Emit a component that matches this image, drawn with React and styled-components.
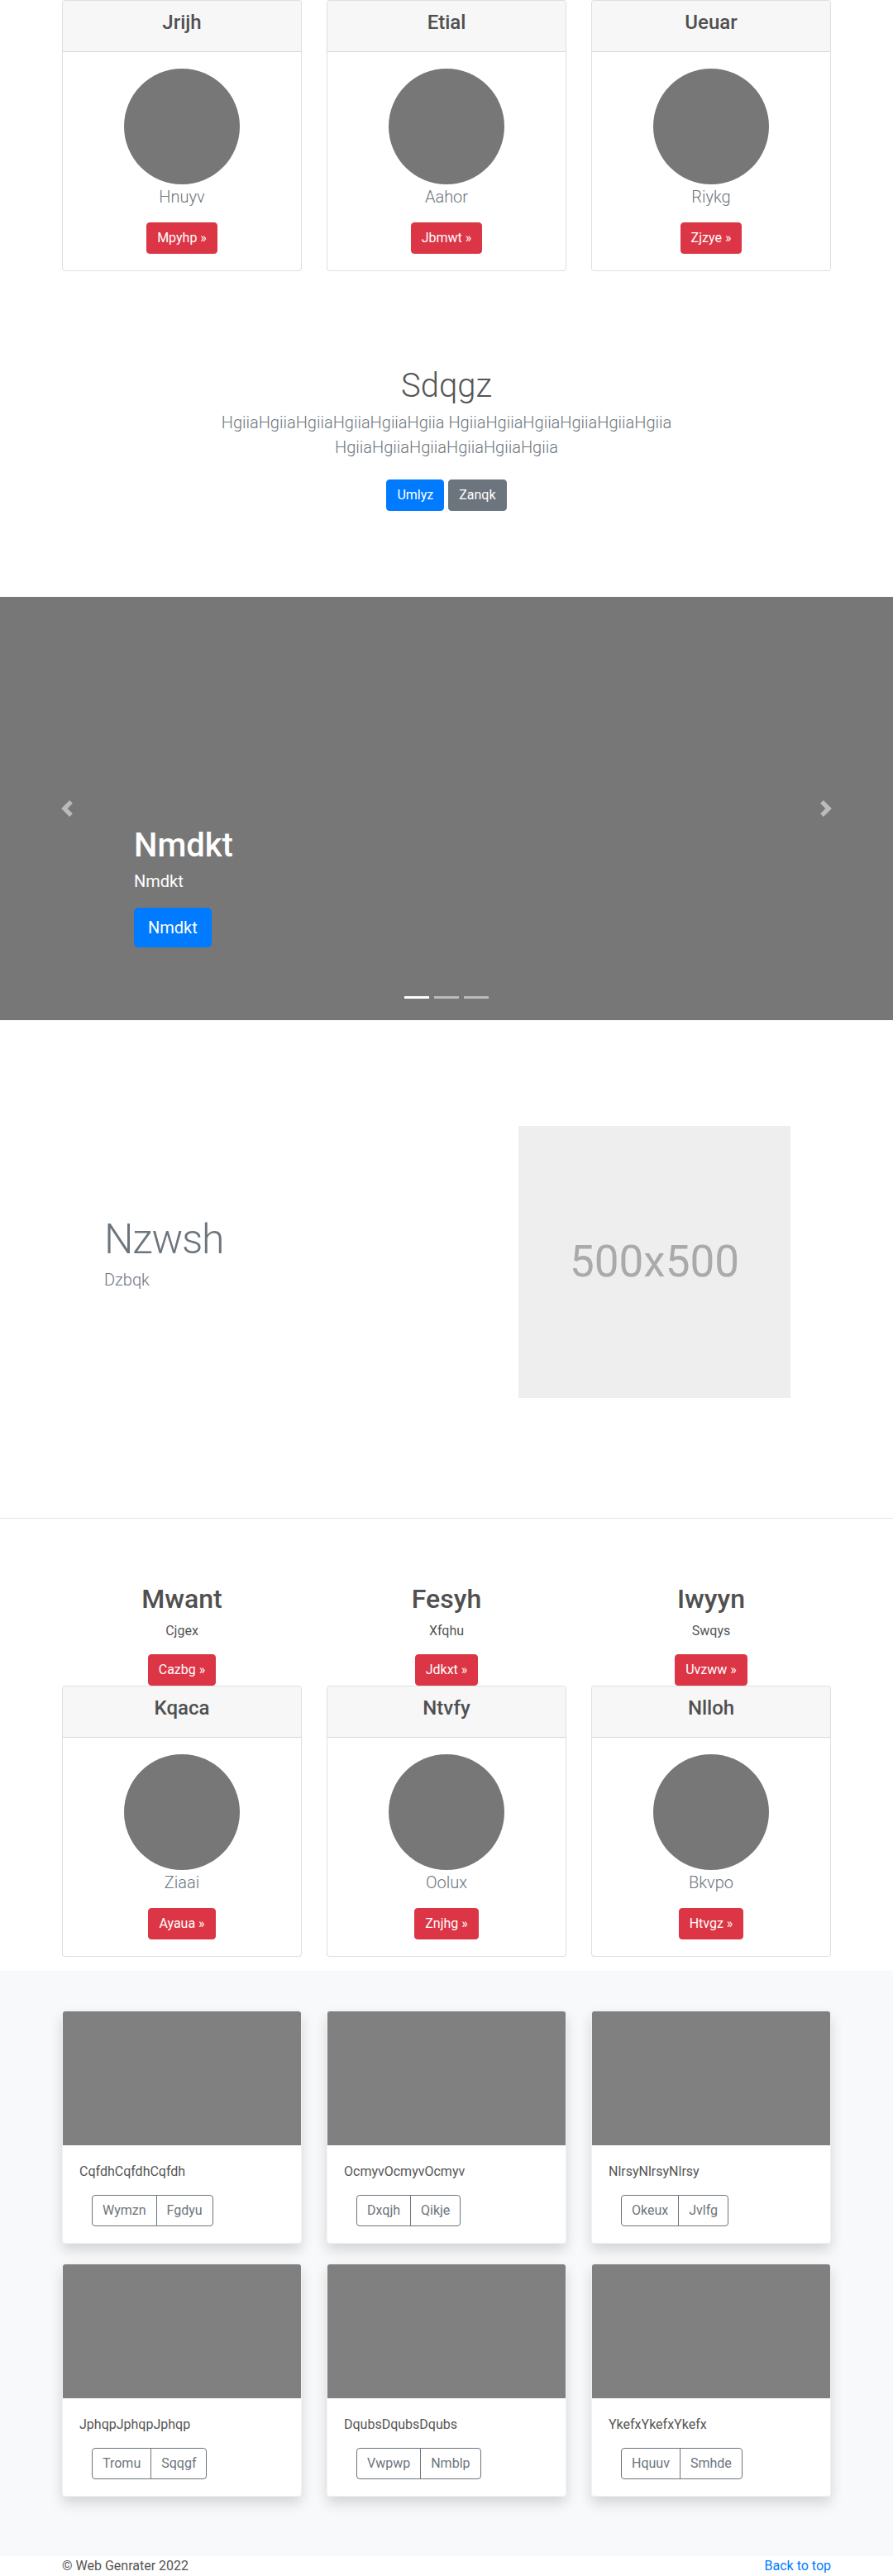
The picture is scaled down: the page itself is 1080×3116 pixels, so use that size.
import styled, { createGlobalStyle } from "styled-components";

const GlobalStyle = createGlobalStyle`
	* {
		box-sizing: border-box;
	}
	body {
		margin: 0;
		font-family: Roboto, "Open Sans", Arial, sans-serif;
		font-size: 16px;
		line-height: 1.5;
		color: #555;
		background: #fff;
	}
	h1, h2, h3, h4, p {
		margin: 0;
	}
`;

const topCards = [
	{ title: "Jrijh", name: "Hnuyv", action: "Mpyhp" },
	{ title: "Etial", name: "Aahor", action: "Jbmwt" },
	{ title: "Ueuar", name: "Riykg", action: "Zjzye" },
];

const bottomCards = [
	{ title: "Kqaca", name: "Ziaai", action: "Ayaua" },
	{ title: "Ntvfy", name: "Oolux", action: "Znjhg" },
	{ title: "Nlloh", name: "Bkvpo", action: "Htvgz" },
];

const marketing = [
	{ title: "Mwant", text: "Cjgex", action: "Cazbg" },
	{ title: "Fesyh", text: "Xfqhu", action: "Jdkxt" },
	{ title: "Iwyyn", text: "Swqys", action: "Uvzww" },
];

const albumItems = [
	{ text: "CqfdhCqfdhCqfdh", buttons: ["Wymzn", "Fgdyu"] },
	{ text: "OcmyvOcmyvOcmyv", buttons: ["Dxqjh", "Qikje"] },
	{ text: "NlrsyNlrsyNlrsy", buttons: ["Okeux", "Jvlfg"] },
	{ text: "JphqpJphqpJphqp", buttons: ["Tromu", "Sqqgf"] },
	{ text: "DqubsDqubsDqubs", buttons: ["Vwpwp", "Nmblp"] },
	{ text: "YkefxYkefxYkefx", buttons: ["Hquuv", "Smhde"] },
];

const Container = styled.div`
	max-width: ${(p) => p.$max || 960}px;
	margin: 0 auto;
	padding: 0 15px;
`;

const ThreeCols = styled.div`
	display: grid;
	grid-template-columns: repeat(3, 1fr);
	column-gap: 30px;
`;

const CardSection = styled.section`
	padding-bottom: ${(p) => p.$bottom || 0}px;
`;

const ProfileCard = styled.div`
	border: 1px solid rgba(0, 0, 0, 0.125);
	border-radius: 4px;
	background: #fff;
	overflow: hidden;
`;

const CardHeader = styled.div`
	padding: 12px 20px;
	background: #f7f7f7;
	border-bottom: 1px solid rgba(0, 0, 0, 0.125);
	text-align: center;
`;

const CardTitle = styled.h4`
	font-size: 24px;
	font-weight: 500;
	line-height: 1.2;
	margin-bottom: 8px;
	color: #505050;
`;

const CardBody = styled.div`
	padding: 20px;
	text-align: center;
`;

const Avatar = styled.div`
	width: 140px;
	height: 140px;
	border-radius: 50%;
	background: #777;
	margin: 0 auto;
`;

const Lead = styled.p`
	font-size: 20px;
	font-weight: 300;
	line-height: 30px;
	color: #6c757d;
	margin-bottom: ${(p) => p.$mb ?? 16}px;
`;

const Button = styled.a`
	display: inline-block;
	padding: ${(p) => (p.$large ? "8px 16px" : "6px 12px")};
	font-size: ${(p) => (p.$large ? 20 : 16)}px;
	line-height: 1.5;
	border-radius: ${(p) => (p.$large ? 4.8 : 4)}px;
	border: 1px solid ${(p) => p.$color};
	background: ${(p) => p.$color};
	color: #fff;
	text-decoration: none;
	white-space: nowrap;
`;

const Jumbotron = styled.section`
	padding: 48px 0 104px;
	text-align: center;
`;

const JumboTitle = styled.h1`
	font-size: 40px;
	font-weight: 300;
	line-height: 1.2;
	padding-top: 3px;
	margin-bottom: 5px;
	color: #555;
`;

const ButtonRow = styled.div`
	display: flex;
	justify-content: center;
	gap: 5px;
	padding-top: 8px;
`;

const Carousel = styled.section`
	position: relative;
	height: 512px;
	background: #777;
	overflow: hidden;
`;

const Control = styled.a`
	position: absolute;
	top: 0;
	bottom: 0;
	${(p) => (p.$side === "left" ? "left: 0;" : "right: 0;")}
	width: 15%;
	display: flex;
	align-items: center;
	justify-content: center;
	opacity: 0.5;
`;

const Indicators = styled.ol`
	position: absolute;
	left: 0;
	right: 0;
	bottom: 26px;
	display: flex;
	justify-content: center;
	gap: 6px;
	margin: 0;
	padding: 0;
	list-style: none;
`;

const Indicator = styled.li`
	width: 30px;
	height: 3px;
	background: #fff;
	opacity: ${(p) => (p.$active ? 1 : 0.5)};
`;

const Caption = styled.div`
	position: absolute;
	left: 15%;
	right: 15%;
	bottom: 88px;
	color: #fff;
	text-align: left;
`;

const CaptionTitle = styled.h1`
	font-size: 40px;
	font-weight: 500;
	line-height: 48px;
	margin-bottom: 4px;
`;

const CaptionText = styled.p`
	font-size: 20px;
	line-height: 30px;
	margin-bottom: 17px;
`;

const Featurette = styled.section`
	padding: 128px 0 145px;
	border-bottom: 1px solid rgba(0, 0, 0, 0.1);
`;

const FeatureRow = styled.div`
	display: flex;
	align-items: center;
`;

const FeatureText = styled.div`
	flex: 1;
	padding-left: 51px;
`;

const FeatureHeading = styled.h2`
	font-size: 50px;
	font-weight: 300;
	line-height: 1;
	letter-spacing: -1.2px;
	color: #6c757d;
	margin-bottom: 9px;
`;

const Placeholder = styled.div`
	width: 329px;
	height: 329px;
	margin-right: 49px;
	background: #eee;
	color: #aaa;
	font-size: 53px;
	display: flex;
	align-items: center;
	justify-content: center;
`;

const Marketing = styled.section`
	padding-top: 78px;
`;

const MarketCol = styled.div`
	text-align: center;
`;

const MarketTitle = styled.h2`
	font-size: 32px;
	font-weight: 500;
	line-height: 1.2;
	margin-bottom: 8px;
	color: #505050;
`;

const MarketText = styled.p`
	margin-bottom: 16px;
`;

const Album = styled.section`
	background: #f8f9fa;
	padding: 48px 0;
`;

const AlbumCard = styled.div`
	background: #fff;
	border: 1px solid rgba(0, 0, 0, 0.05);
	border-radius: 4px;
	overflow: hidden;
	box-shadow: 0 8px 16px rgba(0, 0, 0, 0.15);
	margin-bottom: 24px;
`;

const Thumb = styled.div`
	height: 162px;
	background: #808080;
`;

const AlbumBody = styled.div`
	padding: 20px;
`;

const AlbumText = styled.p`
	margin-bottom: 16px;
`;

const ButtonGroup = styled.div`
	display: inline-flex;
	margin-left: 15px;
`;

const OutlineButton = styled.button`
	font-family: inherit;
	font-size: 16px;
	line-height: 1.5;
	padding: 6px 12px;
	background: transparent;
	color: #6c757d;
	border: 1px solid #6c757d;
	border-radius: 0;
	&:first-child {
		border-radius: 4px 0 0 4px;
	}
	&:last-child {
		border-radius: 0 4px 4px 0;
		margin-left: -1px;
	}
`;

const Footer = styled.footer`
	line-height: 24px;
`;

const FooterRow = styled.div`
	display: flex;
	justify-content: space-between;
`;

const TopLink = styled.a`
	color: #007bff;
	text-decoration: none;
`;

function Chevron({ dir }) {
	const d =
		dir === "left"
			? "M5.25 0l-4 4 4 4 1.5-1.5L4.25 4l2.5-2.5L5.25 0z"
			: "M2.75 0l-1.5 1.5L3.75 4l-2.5 2.5L2.75 8l4-4-4-4z";
	return (
		<svg width="20" height="20" viewBox="0 0 8 8" fill="#fff">
			<path d={d} />
		</svg>
	);
}

function Profiles({ items }) {
	return (
		<ThreeCols>
			{items.map((item) => (
				<ProfileCard key={item.title}>
					<CardHeader>
						<CardTitle>{item.title}</CardTitle>
					</CardHeader>
					<CardBody>
						<Avatar />
						<Lead>{item.name}</Lead>
						<Button $color="#dc3545">{item.action} »</Button>
					</CardBody>
				</ProfileCard>
			))}
		</ThreeCols>
	);
}

export default function App() {
	return (
		<>
			<GlobalStyle />
			<CardSection $bottom={64}>
				<Container>
					<Profiles items={topCards} />
				</Container>
			</CardSection>

			<Jumbotron>
				<Container $max={640}>
					<JumboTitle>Sdqgz</JumboTitle>
					<Lead>
						HgiiaHgiiaHgiiaHgiiaHgiiaHgiia HgiiaHgiiaHgiiaHgiiaHgiiaHgiia
						HgiiaHgiiaHgiiaHgiiaHgiiaHgiia
					</Lead>
					<ButtonRow>
						<Button $color="#007bff">Umlyz</Button>
						<Button $color="#6c757d">Zanqk</Button>
					</ButtonRow>
				</Container>
			</Jumbotron>

			<Carousel>
				<Indicators>
					<Indicator $active />
					<Indicator />
					<Indicator />
				</Indicators>
				<Caption>
					<CaptionTitle>Nmdkt</CaptionTitle>
					<CaptionText>Nmdkt</CaptionText>
					<Button $large $color="#007bff">
						Nmdkt
					</Button>
				</Caption>
				<Control $side="left">
					<Chevron dir="left" />
				</Control>
				<Control $side="right">
					<Chevron dir="right" />
				</Control>
			</Carousel>

			<Featurette>
				<Container>
					<FeatureRow>
						<FeatureText>
							<FeatureHeading>Nzwsh</FeatureHeading>
							<Lead>Dzbqk</Lead>
						</FeatureText>
						<Placeholder>500x500</Placeholder>
					</FeatureRow>
				</Container>
			</Featurette>

			<Marketing>
				<Container>
					<ThreeCols>
						{marketing.map((item) => (
							<MarketCol key={item.title}>
								<MarketTitle>{item.title}</MarketTitle>
								<MarketText>{item.text}</MarketText>
								<Button $color="#dc3545">{item.action} »</Button>
							</MarketCol>
						))}
					</ThreeCols>
				</Container>
			</Marketing>

			<CardSection $bottom={17}>
				<Container>
					<Profiles items={bottomCards} />
				</Container>
			</CardSection>

			<Album>
				<Container>
					<ThreeCols>
						{albumItems.map((item) => (
							<AlbumCard key={item.text}>
								<Thumb />
								<AlbumBody>
									<AlbumText>{item.text}</AlbumText>
									<ButtonGroup>
										{item.buttons.map((label) => (
											<OutlineButton key={label}>{label}</OutlineButton>
										))}
									</ButtonGroup>
								</AlbumBody>
							</AlbumCard>
						))}
					</ThreeCols>
				</Container>
			</Album>

			<Footer>
				<Container>
					<FooterRow>
						<p>© Web Genrater 2022</p>
						<TopLink href="#">Back to top</TopLink>
					</FooterRow>
				</Container>
			</Footer>
		</>
	);
}
